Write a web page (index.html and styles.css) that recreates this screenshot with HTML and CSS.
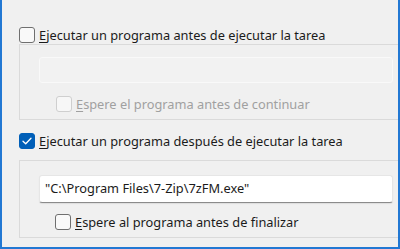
FILE: index.html
```html
<!DOCTYPE html>
<html lang="es">
<head>
<meta charset="utf-8">
<link rel="stylesheet" href="styles.css">
</head>
<body>
<div class="frame">
  <div class="row row-top">
    <span class="cb"></span>
    <span class="label"><u>E</u>jecutar un programa antes de ejecutar la tarea</span>
  </div>
  <div class="group group-one">
    <div class="field field-disabled"></div>
    <div class="row row-sub">
      <span class="cb cb-disabled"></span>
      <span class="label label-disabled"><u>E</u>spere el programa antes de continuar</span>
    </div>
  </div>
  <div class="row row-second">
    <span class="cb cb-checked">
      <svg width="10" height="8" viewBox="0 0 10 8"><path d="M1 4.2 L3.7 6.8 L9 1.2" fill="none" stroke="#fff" stroke-width="1.3" stroke-linecap="round" stroke-linejoin="round"/></svg>
    </span>
    <span class="label"><u>E</u>jecutar un programa después de ejecutar la tarea</span>
  </div>
  <div class="group group-two">
    <div class="field field-active">"C:\Program Files\7-Zip\7zFM.exe"</div>
    <div class="row row-sub2">
      <span class="cb"></span>
      <span class="label"><u>E</u>spere al programa antes de finalizar</span>
    </div>
  </div>
</div>
</body>
</html>
```
FILE: styles.css
```css
html, body {
  margin: 0;
  padding: 0;
}
body {
  background: #f0f0f0;
  font-family: "Noto Sans", "Open Sans", sans-serif;
  font-size: 12.8px;
  color: #1b1b1b;
}
.frame {
  box-sizing: border-box;
  width: 400px;
  height: 249px;
  background: #f0f0f0;
  border-left: 2px solid #2278d3;
  border-right: 2px solid #2278d3;
  border-bottom: 2px solid #2278d3;
  padding-left: 17px;
  padding-top: 27px;
  overflow: hidden;
}
.row {
  display: flex;
  align-items: center;
  height: 16px;
}
.label {
  margin-left: 4px;
  white-space: nowrap;
  line-height: 16px;
}
.label u {
  text-decoration-thickness: 1px;
  text-underline-offset: 2px;
}
.label-disabled {
  color: #a0a0a0;
}
.cb {
  box-sizing: border-box;
  flex: none;
  width: 16px;
  height: 16px;
  border: 1px solid #6f6f6f;
  border-radius: 3px;
  background: #f9f9f9;
  display: flex;
  align-items: center;
  justify-content: center;
}
.cb-disabled {
  border-color: #cfcfcf;
  background: #f7f7f7;
}
.cb-checked {
  border-color: #005fb8;
  background: #005fb8;
}
.group {
  box-sizing: border-box;
  border-top: 1px solid #dadada;
  border-left: 1px solid #dadada;
  border-bottom: 1px solid #dadada;
  padding-left: 19px;
}
.group-one {
  margin-top: 1px;
  height: 76px;
  padding-top: 12px;
}
.group-two {
  margin-top: 11px;
  height: 78px;
  padding-top: 14px;
}
.field {
  box-sizing: border-box;
  width: 354px;
  border-radius: 3px;
}
.field-disabled {
  height: 26px;
  background: #f2f2f2;
  border: 1px solid #f9f9f9;
}
.field-active {
  height: 28px;
  background: #ffffff;
  border: 1px solid #e6e6e6;
  border-bottom: 1px solid #8b8b8b;
  box-shadow: 0 1px 1px rgba(0,0,0,0.08);
  padding-left: 5px;
  line-height: 25px;
  color: #1b1b1b;
  white-space: nowrap;
}
.row-sub {
  margin-top: 13px;
  padding-left: 17px;
}
.row-second {
  margin-top: 13px;
}
.row-sub2 {
  margin-top: 11px;
  padding-left: 16px;
}
```
